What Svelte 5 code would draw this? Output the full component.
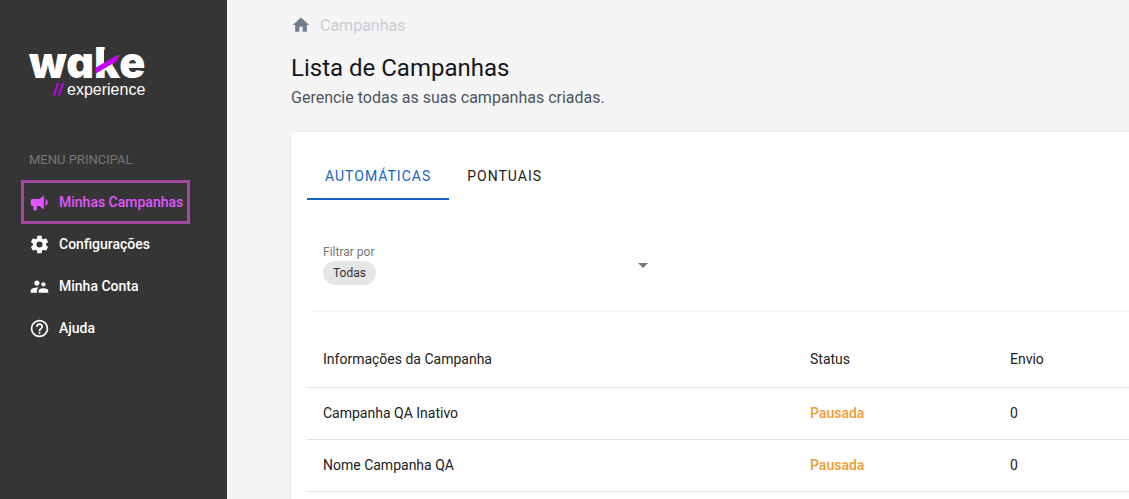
<script lang="ts">
  const menu = [
    { label: 'Minhas Campanhas', active: true, icon: 'M12,8H4A2,2 0 0,0 2,10V14A2,2 0 0,0 4,16H5V20A1,1 0 0,0 6,21H8A1,1 0 0,0 9,20V16H12L17,20V4L12,8M21.5,12C21.5,13.71 20.54,15.26 19,16V8C20.53,8.75 21.5,10.3 21.5,12Z' },
    { label: 'Configurações', active: false, icon: 'M12,15.5A3.5,3.5 0 0,1 8.5,12A3.5,3.5 0 0,1 12,8.5A3.5,3.5 0 0,1 15.5,12A3.5,3.5 0 0,1 12,15.5M19.43,12.97C19.47,12.65 19.5,12.33 19.5,12C19.5,11.67 19.47,11.34 19.43,11L21.54,9.37C21.73,9.22 21.78,8.95 21.66,8.73L19.66,5.27C19.54,5.05 19.27,4.96 19.05,5.05L16.56,6.05C16.04,5.66 15.5,5.32 14.87,5.07L14.5,2.42C14.46,2.18 14.25,2 14,2H10C9.75,2 9.54,2.18 9.5,2.42L9.13,5.07C8.5,5.32 7.96,5.66 7.44,6.05L4.95,5.05C4.73,4.96 4.46,5.05 4.34,5.27L2.34,8.73C2.21,8.95 2.27,9.22 2.46,9.37L4.57,11C4.53,11.34 4.5,11.67 4.5,12C4.5,12.33 4.53,12.65 4.57,12.97L2.46,14.63C2.27,14.78 2.21,15.05 2.34,15.27L4.34,18.73C4.46,18.95 4.73,19.03 4.95,18.95L7.44,17.94C7.96,18.34 8.5,18.68 9.13,18.93L9.5,21.58C9.54,21.82 9.75,22 10,22H14C14.25,22 14.46,21.82 14.5,21.58L14.87,18.93C15.5,18.67 16.04,18.34 16.56,17.94L19.05,18.95C19.27,19.03 19.54,18.95 19.66,18.73L21.66,15.27C21.78,15.05 21.73,14.78 21.54,14.63L19.43,12.97Z' },
    { label: 'Minha Conta', active: false, icon: 'M16.5 12c1.38 0 2.49-1.12 2.49-2.5S17.88 7 16.5 7C15.12 7 14 8.12 14 9.5s1.12 2.5 2.5 2.5zM9 11c1.66 0 2.99-1.34 2.99-3S10.66 5 9 5C7.34 5 6 6.34 6 8s1.34 3 3 3zm7.5 3c-1.83 0-5.5.92-5.5 2.75V19h11v-2.25c0-1.83-3.67-2.75-5.5-2.75zM9 13c-2.33 0-7 1.17-7 3.5V19h7v-2.25c0-.85.33-2.34 2.37-3.47C10.5 13.1 9.66 13 9 13z' },
    { label: 'Ajuda', active: false, icon: 'M11,18H13V16H11V18M12,2A10,10 0 0,0 2,12A10,10 0 0,0 12,22A10,10 0 0,0 22,12A10,10 0 0,0 12,2M12,20C7.59,20 4,16.41 4,12C4,7.59 7.59,4 12,4C16.41,4 20,7.59 20,12C20,16.41 16.41,20 12,20M12,6A4,4 0 0,0 8,10H10A2,2 0 0,1 12,8A2,2 0 0,1 14,10C14,12 11,11.75 11,15H13C13,12.75 16,12.5 16,10A4,4 0 0,0 12,6Z' }
  ];
  const tabs = ['AUTOMÁTICAS', 'PONTUAIS'];
  let current = $state(0);
  const rows = [
    { name: 'Campanha QA Inativo', status: 'Pausada', sent: 0 },
    { name: 'Nome Campanha QA', status: 'Pausada', sent: 0 }
  ];
</script>

<div class="app">
  <aside>
    <svg class="logo" viewBox="0 0 120 56" role="img" aria-label="wake experience">
      <text class="brand" x="0" y="35">wake</text>
      <path fill="#353535" d="M75 7h16v5L75 21z" />
      <path fill="#c300f5" d="M67 24.500 89 11.500v6L67 30.500z" />
      <path fill="#c300f5" d="M28 40h2l-4 12.500h-2zM33 40h2l-4 12.500h-2z" />
      <text class="product" x="38" y="52">experience</text>
    </svg>
    <h2>MENU PRINCIPAL</h2>
    <nav>
      {#each menu as item}
        <a href="#top" class:active={item.active}>
          <svg viewBox="0 0 24 24" aria-hidden="true"><path d={item.icon} /></svg>
          {item.label}
        </a>
      {/each}
    </nav>
  </aside>

  <main>
    <div class="crumbs">
      <a href="#top" aria-label="Início"><svg viewBox="0 0 24 24" aria-hidden="true"><path d="M10,20V14H14V20H19V12H22L12,3L2,12H5V20H10Z" /></svg></a>
      <span>Campanhas</span>
    </div>
    <h1>Lista de Campanhas</h1>
    <p>Gerencie todas as suas campanhas criadas.</p>

    <section class="card">
      <div class="tabs" role="tablist">
        {#each tabs as tab, i}
          <button role="tab" aria-selected={current === i} class:selected={current === i} onclick={() => (current = i)}>{tab}</button>
        {/each}
      </div>
      <div class="filter">
        <div class="field">
          <label for="filter">Filtrar por</label>
          <select id="filter"><option>Todas</option></select>
        </div>
        <svg viewBox="0 0 24 24" aria-hidden="true"><path d="M7,10L12,15L17,10H7Z" /></svg>
      </div>
      <div class="sheet">
        <table>
          <thead>
            <tr><th>Informações da Campanha</th><th class="status-col">Status</th><th class="sent-col">Envio</th></tr>
          </thead>
          <tbody>
            {#each rows as row}
              <tr><td>{row.name}</td><td class="status">{row.status}</td><td>{row.sent}</td></tr>
            {/each}
          </tbody>
        </table>
      </div>
    </section>
  </main>
</div>

<style>
  :global(body) { margin: 0; background: #f5f5f5; font-family: Roboto, sans-serif; }
  .app { display: flex; min-height: 100vh; overflow: hidden; }
  aside { flex: none; width: 227px; box-sizing: border-box; padding: 43px 21px 0; background: #353535; color: #fff; }
  .logo { display: block; width: 120px; height: 56px; margin-left: 8px; fill: #fff; overflow: visible; }
  .brand { font: 900 43px Inter, sans-serif; font-feature-settings: 'cv11'; }
  .product { font: 400 16px "Liberation Sans", sans-serif; }
  h2 { margin: 51px 8px 10px; font-size: 13px; line-height: 20px; font-weight: 400; color: #777; }
  nav { display: flex; flex-direction: column; align-items: flex-start; }
  nav a { display: flex; align-items: center; gap: 9px; height: 42px; padding: 0 7px 0 8px; font-size: 14px; font-weight: 500; color: #fff; text-decoration: none; white-space: nowrap; }
  nav svg { width: 21px; height: 21px; fill: currentColor; }
  nav a.active { color: #e055ff; height: 44px; box-sizing: border-box; border: 3px solid #a349a4; padding: 0 4px 0 5px; margin-bottom: -1px; }
  main { flex: 1; min-width: 0; padding: 15px 0 0 64px; color: #212121; }
  .crumbs { display: flex; align-items: center; gap: 9px; height: 20px; font-size: 16px; color: #c8ccd2; }
  .crumbs a, .crumbs svg { display: block; width: 20px; height: 20px; fill: #708090; }
  h1 { margin: 17px 0 0; font-size: 24px; line-height: 32px; font-weight: 400; color: #16161d; }
  p { margin: 2px 0 0; font-size: 16px; line-height: 24px; color: #4b5563; }
  .card { margin: 22px -16px 0 0; padding: 20px 16px; background: #fff; border-radius: 4px; box-shadow: 0 1px 3px #0003; }
  .tabs { display: flex; }
  .tabs button { height: 48px; padding: 2px 18px 0; border: 0; border-bottom: 2px solid transparent; background: none; font: 400 14px Roboto, sans-serif; letter-spacing: 1px; color: #212121; }
  .tabs button.selected { color: #1565c0; border-color: #1565c0; }
  .filter { display: flex; align-items: center; justify-content: space-between; box-sizing: border-box; width: 348px; margin: 44px 0 26px; padding-left: 16px; }
  .filter svg { width: 24px; height: 24px; fill: #757575; }
  .field { display: flex; flex-direction: column; align-items: flex-start; font-size: 12px; }
  label { line-height: 17px; color: #777; }
  select { appearance: none; field-sizing: content; height: 24px; padding: 0 10px; border: 0; border-radius: 12px; background: #e6e6e6; font: 400 12px Roboto, sans-serif; color: #333; }
  .sheet { border-top: 1px solid #f7f7f7; border-radius: 4px 0 0; padding-top: 19px; }
  table { width: 100%; border-collapse: collapse; table-layout: fixed; font-size: 14px; color: #212121; }
  th, td { padding: 0 16px; border-bottom: 1px solid #e0e0e0; text-align: left; font-weight: 400; }
  th { height: 56px; }
  td { height: 49px; padding-bottom: 2px; }
  .status-col { width: 168px; }
  .sent-col { width: 103px; }
  .status { color: #ed9b33; font-weight: 500; }
</style>
